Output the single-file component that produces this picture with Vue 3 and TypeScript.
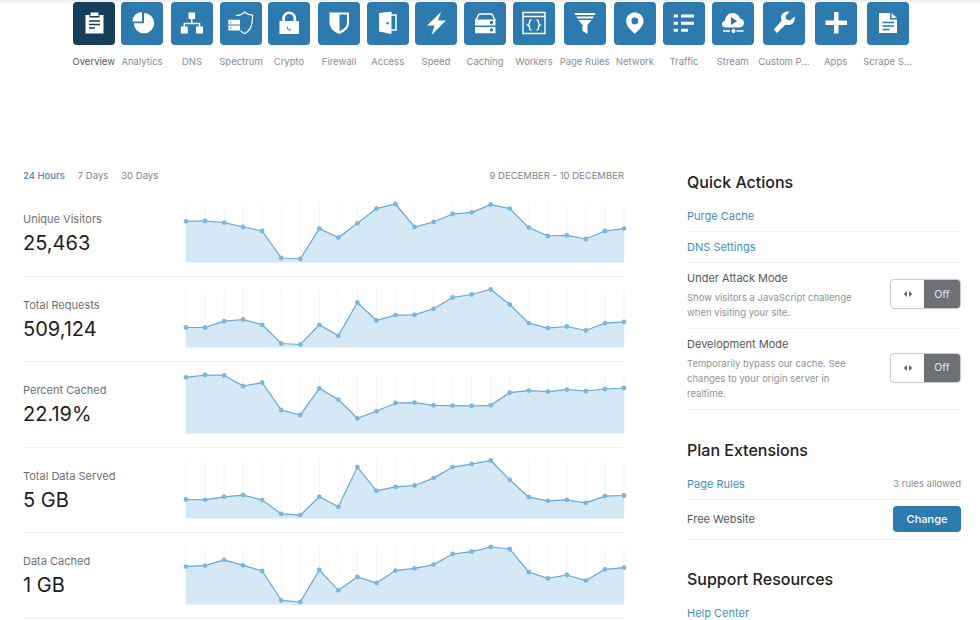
<template>
  <div class="page">
    <nav class="nav">
      <div v-for="item in navItems" :key="item.label" class="nav-item" :style="{ width: item.pitch + 'px' }">
        <div class="nav-col">
          <div class="tile" :class="{ active: item.active }">
            <svg viewBox="0 0 42 42" width="42" height="42">
              <path v-for="(p, i) in item.icon" :key="i" :d="p.d" :class="'i-' + p.k" :stroke-width="p.w" fill-rule="evenodd" />
            </svg>
          </div>
          <span class="nav-label" :class="{ current: item.active }">{{ item.label }}</span>
        </div>
      </div>
    </nav>

    <main class="main">
      <section class="stats">
        <div class="stats-head">
          <div class="ranges">
            <span class="range on">24 Hours</span>
            <span class="range">7 Days</span>
            <span class="range">30 Days</span>
          </div>
          <span class="dates">9 DECEMBER - 10 DECEMBER</span>
        </div>

        <div v-for="row in charts" :key="row.label" class="stat-row">
          <div class="stat-text">
            <div class="stat-label">{{ row.label }}</div>
            <div class="stat-value">{{ row.value }}</div>
          </div>
          <svg class="chart" width="438" :height="chartH" :viewBox="`0 0 438 ${chartH}`">
            <line v-for="x in row.xs" :key="x" :x1="x" :x2="x" y1="0" :y2="chartH" class="grid" />
            <path :d="row.area" class="area" />
            <path :d="row.line" class="line" />
            <circle v-for="(pt, i) in row.pts" :key="i" :cx="pt[0]" :cy="pt[1]" r="2.4" class="dot" />
          </svg>
        </div>
      </section>

      <aside class="side">
        <h3 class="side-title">Quick Actions</h3>
        <div class="link-row"><a class="link">Purge Cache</a></div>
        <div class="link-row"><a class="link">DNS Settings</a></div>
        <div v-for="mode in modes" :key="mode.title" class="mode-row">
          <div class="mode-text">
            <div class="mode-title">{{ mode.title }}</div>
            <div class="mode-desc">
              <div v-for="ln in mode.lines" :key="ln">{{ ln }}</div>
            </div>
          </div>
          <div class="toggle">
            <span class="toggle-knob">
              <svg width="10" height="6" viewBox="0 0 10 6"><path d="M4 0v6L0.6 3zM6 0v6l3.4-3z" fill="#6b6f73" /></svg>
            </span>
            <span class="toggle-off">Off</span>
          </div>
        </div>

        <h3 class="side-title spaced">Plan Extensions</h3>
        <div class="link-row between">
          <a class="link">Page Rules</a>
          <span class="allowed">3 rules allowed</span>
        </div>
        <div class="plan-row">
          <span class="plan-name">Free Website</span>
          <button class="change">Change</button>
        </div>

        <h3 class="side-title spaced">Support Resources</h3>
        <div class="link-row"><a class="link">Help Center</a></div>
      </aside>
    </main>
  </div>
</template>

<script setup lang="ts">
type IconPath = { d: string; k: 'f' | 's' | 'b'; w?: number }

// f = white fill, s = white stroke, b = tile coloured fill/stroke
const navItems: { label: string; pitch: number; active?: boolean; icon: IconPath[] }[] = [
  {
    label: 'Overview', pitch: 48.3, active: true,
    icon: [
      { k: 'f', d: 'M12.5 13h4v2.5h10V13h4v18.5h-18zM17.5 10.5h8V14h-8z' },
      { k: 'b', w: 1.6, d: 'M16 19h11M16 22.5h11M16 26h6' },
    ],
  },
  {
    label: 'Analytics', pitch: 50,
    icon: [
      { k: 'f', d: 'M23 11a10.2 10.2 0 1 1-10.2 10.2H23z' },
      { k: 'f', d: 'M21 10v9.5h-9.6A9.6 9.6 0 0 1 21 10z' },
    ],
  },
  {
    label: 'DNS', pitch: 49,
    icon: [
      { k: 'f', d: 'M17.5 10.5h6.6v6.6h-6.6zM9.8 24.5h7v7h-7zM25 24.5h7v7h-7z' },
      { k: 's', w: 1.5, d: 'M20.8 17v4.5M13.3 25v-3.5h15.2V25' },
    ],
  },
  {
    label: 'Spectrum', pitch: 48,
    icon: [
      { k: 's', w: 1.2, d: 'M16 13.5c3.5 0 6.5-1.2 8.5-3.5 2 1.8 4.6 3 8 3.2 0 8.5-1.2 15-7.8 18.5-1.8-.8-3.2-1.8-4.2-3' },
      { k: 'f', d: 'M8.3 17.8H20v4.7H8.3zM8.3 23.5H20v5H8.3z' },
      { k: 'b', w: 1, d: 'M10 20.2h1.4M10 26h1.4' },
    ],
  },
  {
    label: 'Crypto', pitch: 50,
    icon: [
      { k: 'f', d: 'M11.5 19h19.5v13H11.5zM19.4 24.2a1.9 1.9 0 1 0 3.2 1.4v3h-2.4v-3a1.9 1.9 0 0 1-.8-1.4z' },
      { k: 's', w: 2.6, d: 'M15.6 19.5v-3.2a5.6 5.6 0 0 1 11.2 0v3.2' },
    ],
  },
  {
    label: 'Firewall', pitch: 48.7,
    icon: [
      { k: 'f', d: 'M11.5 10.5h19.5v10c0 5.5-4 9.3-9.7 11.5C15.500 29.800 11.500 26 11.500 20.500z' },
      { k: 'b', d: 'M22 13h6.500v7.500c0 3.600-2.500 6.200-6.500 8z' },
    ],
  },
  {
    label: 'Access', pitch: 48.3,
    icon: [
      { k: 's', w: 1.5, d: 'M23 13h6v15h-5' },
      { k: 'f', d: 'M12 11l12.500-1.500V32L12 29.500zM20.500 20a1.300 1.300 0 1 0 0 2.600 1.300 1.300 0 0 0 0-2.600z' },
    ],
  },
  {
    label: 'Speed', pitch: 49,
    icon: [{ k: 'f', d: 'M26 10 12 23.500h7.500L16.500 33 31 18.500h-8z' }],
  },
  {
    label: 'Caching', pitch: 49,
    icon: [
      { k: 's', w: 1.5, d: 'M12 18l2.500-5c.3-.6.8-1 1.500-1h11c.7 0 1.200.4 1.500 1l2.500 5' },
      { k: 'f', d: 'M11 17.500h20.500v6H11zM11 25h20.500v6.200H11z' },
      { k: 'b', d: 'M26.500 19.500h2v2h-2zM26.500 27h2v2h-2z' },
    ],
  },
  {
    label: 'Workers', pitch: 50.7,
    icon: [
      { k: 's', w: 1.4, d: 'M10 10.500h22v21H10zM10 14.500h22' },
      { k: 's', w: 1.5, d: 'M18.500 18c-2 0-2 .8-2 2.500 0 1.500-.3 2-1.500 2.500 1.200.5 1.500 1 1.500 2.500 0 1.700 0 2.500 2 2.500M23.500 18c2 0 2 .8 2 2.500 0 1.500.3 2 1.500 2.500-1.200.5-1.500 1-1.500 2.500 0 1.700 0 2.500-2 2.500' },
    ],
  },
  {
    label: 'Page Rules', pitch: 50.3,
    icon: [
      { k: 'f', d: 'M10.500 11h21l-1 2h-19zM12.300 14.500h17.400l-1 2H13.300zM14.300 18h13.400L23.500 23v9l-5-3v-6z' },
    ],
  },
  {
    label: 'Network', pitch: 49,
    icon: [
      { k: 'f', d: 'M20.800 10.200a8.700 8.700 0 0 1 8.700 8.700c0 4.800-4.700 9.400-8.700 12.800-4-3.400-8.700-8-8.700-12.800a8.700 8.700 0 0 1 8.700-8.700zM20.800 15.500a3.400 3.400 0 1 0 0 6.800 3.400 3.400 0 0 0 0-6.800z' },
    ],
  },
  {
    label: 'Traffic', pitch: 48.7,
    icon: [
      { k: 'f', d: 'M10.700 12.500h4.300v3h-4.300zM10.700 19.700h4.300v3h-4.300zM10.700 26.800h4.300v3h-4.300zM18 12.500h13v3H18zM18 19.700h13v3H18zM18 26.800h7v3h-7z' },
    ],
  },
  {
    label: 'Stream', pitch: 51.3,
    icon: [
      { k: 'f', d: 'M15 25.500h-1.500c-2 0-3.500-1.300-3.500-3.200 0-1.700 1.200-3 2.800-3.200.6-4.500 3.800-8 8-8 3.500 0 6.300 2.300 7.200 5.500 2.200.2 4 1.900 4 4.500 0 2.500-1.800 4.400-4.300 4.400H15zM19 15v8l6.200-4z' },
      { k: 's', w: 1.4, d: 'M11 29h7M24.500 29h7' },
      { k: 'f', d: 'M21.500 27a2 2 0 1 0 0 4 2 2 0 0 0 0-4z' },
    ],
  },
  {
    label: 'Custom P...', pitch: 51.7,
    icon: [
      { k: 'f', d: 'M31.500 14.500l-4.500 4-3.500-1-1-3.500 4.300-4.200c-3.600-.9-7.500.7-8.500 4.200-.5 1.800-.3 3.300.3 4.700L10.800 27.500l3 3.600 8.800-8.500c1.500.6 3.200.7 4.800.2 3.300-1.100 5-4.700 4.100-8.300z' },
    ],
  },
  {
    label: 'Apps', pitch: 52,
    icon: [{ k: 'f', d: 'M19 10h4.500v8.500H32V23h-8.500v8.500H19V23h-8.500v-4.500H19z' }],
  },
  {
    label: 'Scrape S...', pitch: 52,
    icon: [
      { k: 'f', d: 'M12 11h11v6.500h7V31H12zM24.500 11l5.500 5h-5.500z' },
      { k: 'b', w: 1.6, d: 'M15.500 20.500H27M15.500 24H27M15.500 27.500h7' },
    ],
  },
]

const chartH = 58.6
const step = 438 / 23

const rawCharts = [
  {
    label: 'Unique Visitors', value: '25,463', top: 203.7,
    ys: [221, 220.7, 222.3, 226.7, 230.7, 257.7, 258.7, 228.3, 237.3, 223, 208.3, 203.7, 226.7, 221.7, 213.7, 212, 204.3, 208.3, 227.3, 235.7, 235, 238.7, 230.7, 228.3],
  },
  {
    label: 'Total Requests', value: '509,124', top: 289.2,
    ys: [327.7, 327.7, 321.3, 319.7, 325, 343.7, 344.7, 325, 336, 302.7, 320.7, 315.3, 315, 309, 297.7, 294.7, 289.7, 304.7, 323.3, 328.3, 326.7, 330.7, 323.3, 322],
  },
  {
    label: 'Percent Cached', value: '22.19%', top: 374.7,
    ys: [377, 374.7, 375, 385.7, 382.3, 409.7, 414.7, 388, 399.3, 418, 411, 402.7, 402.3, 405, 405.3, 405.7, 405, 392.3, 390.3, 391.3, 389.3, 390.7, 388.7, 387.7],
  },
  {
    label: 'Total Data Served', value: '5 GB', top: 460.2,
    ys: [499.7, 500, 497, 495.3, 500.3, 514, 515.3, 497, 507, 467.3, 491, 487, 485.7, 478.3, 467.3, 464.3, 460.7, 480, 497.3, 501, 500, 503, 496.3, 495.7],
  },
  {
    label: 'Data Cached', value: '1 GB', top: 545.7,
    ys: [566.3, 565.3, 559.7, 565, 570.7, 600, 601.7, 569.7, 590, 576.7, 582.7, 570.3, 568, 564.3, 553.7, 551.3, 546.7, 548.7, 571.7, 578, 574.7, 580.3, 569, 567.3],
  },
]

const charts = rawCharts.map((c) => {
  const pts = c.ys.map((y, i) => [+(i * step).toFixed(2), +(y - c.top).toFixed(2)])
  const line = pts.map((p, i) => (i ? 'L' : 'M') + p[0] + ' ' + p[1]).join(' ')
  return {
    label: c.label,
    value: c.value,
    pts,
    xs: pts.map((p) => p[0]),
    line,
    area: `${line} L438 ${chartH} L0 ${chartH} Z`,
  }
})

const modes = [
  { title: 'Under Attack Mode', lines: ['Show visitors a JavaScript challenge', 'when visiting your site.'] },
  { title: 'Development Mode', lines: ['Temporarily bypass our cache. See', 'changes to your origin server in', 'realtime.'] },
]
</script>

<style>
html,
body {
  margin: 0;
  background: #fff;
  overflow: hidden;
}
</style>

<style scoped>
.page {
  width: 980px;
  height: 620px;
  overflow: hidden;
  font-family: Inter, "Liberation Sans", sans-serif;
  background: #fff;
  color: #222;
}

.nav {
  display: flex;
  height: 167px;
  box-sizing: border-box;
  padding: 1.5px 0 0 72.7px;
  background: linear-gradient(#ececec, #fff 4px);
}

.nav-col {
  width: 42px;
  display: flex;
  flex-direction: column;
  align-items: center;
}

.tile {
  width: 42px;
  height: 43px;
  border-radius: 4px;
  background: #2c7aae;
  display: flex;
  align-items: center;
  justify-content: center;
}

.tile.active {
  background: #163d5a;
}

.i-f {
  fill: #fff;
}

.i-s {
  fill: none;
  stroke: #fff;
}

.i-b {
  fill: #2c7aae;
  stroke: #2c7aae;
}

.active .i-b {
  fill: none;
  stroke: #163d5a;
}

.nav-label {
  margin-top: 10px;
  font-size: 9.5px;
  line-height: 14px;
  color: #8a8d90;
  white-space: nowrap;
}

.nav-label.current {
  color: #55585b;
}

.main {
  display: flex;
  align-items: flex-start;
}

.stats {
  width: 601px;
  margin-left: 23px;
}

.stats-head {
  height: 24px;
  display: flex;
  justify-content: space-between;
  font-size: 9.5px;
  line-height: 18px;
  color: #808386;
}

.ranges {
  display: flex;
  gap: 13px;
}

.range.on {
  color: #3f8dc2;
  font-weight: 500;
}

.stat-row {
  height: 85.5px;
  box-sizing: border-box;
  border-bottom: 1.5px solid #f0f0f0;
  display: flex;
  align-items: flex-start;
}

.stat-text {
  width: 163px;
  padding-top: 20px;
}

.stat-label {
  font-size: 11px;
  line-height: 16px;
  color: #6e7174;
}

.stat-value {
  margin-top: 3px;
  font-size: 20px;
  line-height: 26px;
  color: #1d1d1d;
}

.chart {
  margin-top: 12.7px;
  overflow: visible;
}

.grid {
  stroke: #edf5fb;
  stroke-width: 1;
}

.area {
  fill: #d5e8f6;
}

.line {
  fill: none;
  stroke: #6ba6d2;
  stroke-width: 1.2;
}

.dot {
  fill: #7ab6e0;
}

.side {
  width: 274px;
  margin-left: 63px;
}

.side-title {
  margin: 0 0 4px;
  height: 30px;
  font-size: 16px;
  font-weight: 500;
  line-height: 30px;
  color: #222;
}

.side-title.spaced {
  margin-top: 24.5px;
}

.link-row {
  height: 31px;
  box-sizing: border-box;
  border-bottom: 1px solid #efefef;
  display: flex;
  align-items: center;
  font-size: 11px;
}

.link-row.between {
  justify-content: space-between;
}

.link {
  color: #3f8dc2;
}

.allowed {
  font-size: 9.5px;
  color: #8a8d90;
}

.mode-row {
  display: flex;
  justify-content: space-between;
  align-items: center;
  padding: 8px 0;
  border-bottom: 1px solid #efefef;
}

.mode-title {
  font-size: 11px;
  line-height: 15px;
  color: #55585b;
}

.mode-desc {
  margin-top: 4px;
  font-size: 9.5px;
  line-height: 15px;
  color: #909396;
}

.toggle {
  width: 71px;
  height: 30px;
  margin-bottom: 3px;
  box-sizing: border-box;
  border: 1px solid #c9cccf;
  border-radius: 4px;
  overflow: hidden;
  display: flex;
}

.toggle-knob {
  width: 33px;
  display: flex;
  align-items: center;
  justify-content: center;
}

.toggle-off {
  flex: 1;
  background: #6d7175;
  color: #e4e5e6;
  font-size: 10.5px;
  display: flex;
  align-items: center;
  justify-content: center;
}

.plan-row {
  height: 40px;
  box-sizing: border-box;
  border-bottom: 1px solid #efefef;
  display: flex;
  justify-content: space-between;
  align-items: center;
  font-size: 11px;
  color: #55585b;
}

.change {
  width: 68px;
  height: 26.5px;
  border: none;
  border-radius: 4px;
  background: #2c7aae;
  color: #fff;
  font: 500 11px Inter, "Liberation Sans", sans-serif;
  padding: 0;
}
</style>
